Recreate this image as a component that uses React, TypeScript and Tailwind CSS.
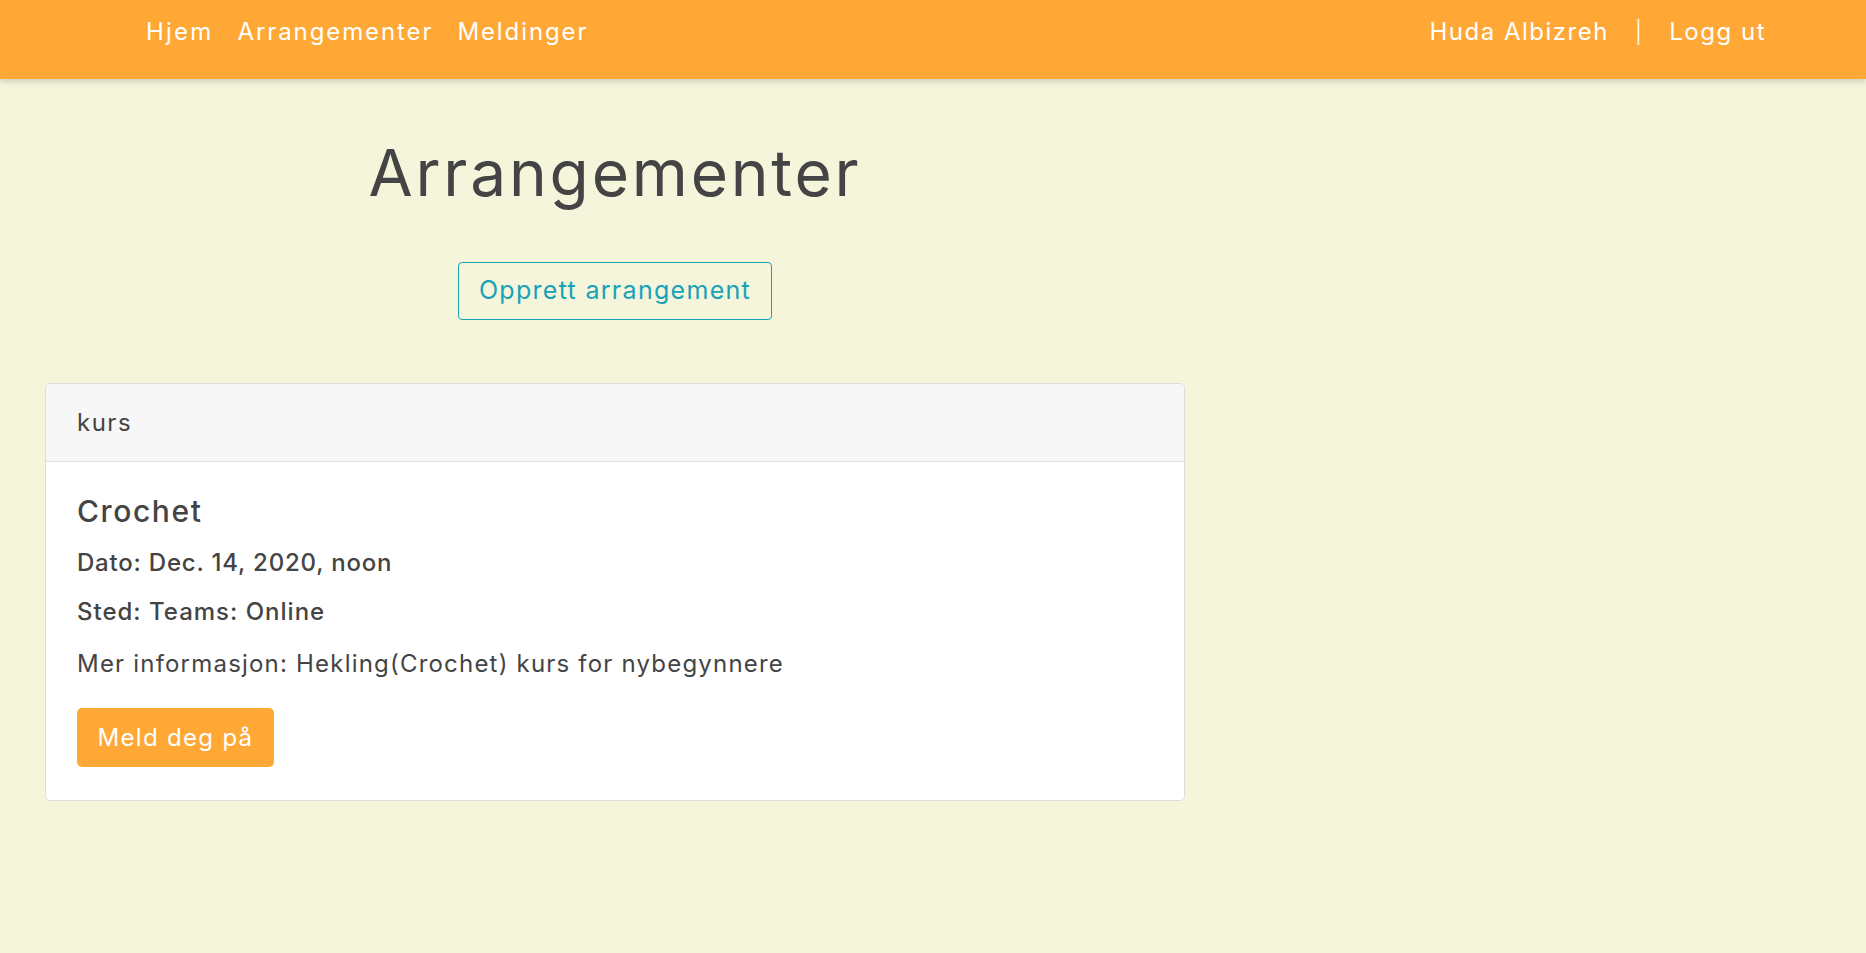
import React from "react";

export default function App() {
  return (
    <div className="min-h-screen w-full bg-[#f5f5dc] text-[#444444]" style={{ fontFamily: "Inter, 'Noto Sans', sans-serif" }}>
      <nav className="flex h-[79px] items-center justify-between bg-[#ffa836] pb-[15px] pl-[146px] pr-[100px] text-[24px] tracking-[1.5px] text-white shadow-[0_3px_6px_rgba(0,0,0,0.15)]">
        <div className="flex items-center gap-[24px]">
          <span className="tracking-[2.2px]">Hjem</span>
          <span className="tracking-[1.9px]">Arrangementer</span>
          <span className="tracking-[1.9px]">Meldinger</span>
        </div>
        <div className="flex items-center">
          <span>Huda Albizreh</span>
          <span className="mx-[26px] text-[22px] font-light">|</span>
          <span>Logg ut</span>
        </div>
      </nav>
      <main className="ml-[45px] w-[1140px]">
        <h1 className="mt-[58px] text-center text-[64px] leading-[72px] font-normal tracking-[2.8px]">Arrangementer</h1>
        <div className="mt-[53px] flex justify-center">
          <button className="h-[58px] w-[314px] rounded-[4px] border border-[#17a2b8] text-[25px] tracking-[1.3px] text-[#17a2b8]">
            Opprett arrangement
          </button>
        </div>
        <div className="mt-[63px] overflow-hidden rounded-[5px] border border-[#dddddd] bg-white">
          <div className="flex h-[78px] items-center border-b border-[#e0e0e0] bg-[#f7f7f7] px-[31px] text-[24px] tracking-[1.5px]">
            kurs
          </div>
          <div className="px-[31px] pt-[32px] pb-[33px]">
            <h5 className="text-[30px] leading-[34px] font-medium tracking-[1.6px]">Crochet</h5>
            <p className="mt-[18px] text-[24px] leading-[34px] font-medium tracking-[0.8px]">Dato: Dec. 14, 2020, noon</p>
            <p className="mt-[15px] text-[24px] leading-[34px] font-medium tracking-[1px]">Sted: Teams: Online</p>
            <p className="mt-[18px] text-[24px] leading-[34px] tracking-[1.2px]">Mer informasjon: Hekling(Crochet) kurs for nybegynnere</p>
            <button className="mt-[27px] h-[59px] w-[197px] rounded-[5px] bg-[#ffa836] text-[24px] tracking-[1.3px] text-white">Meld deg på</button>
          </div>
        </div>
      </main>
    </div>
  );
}
